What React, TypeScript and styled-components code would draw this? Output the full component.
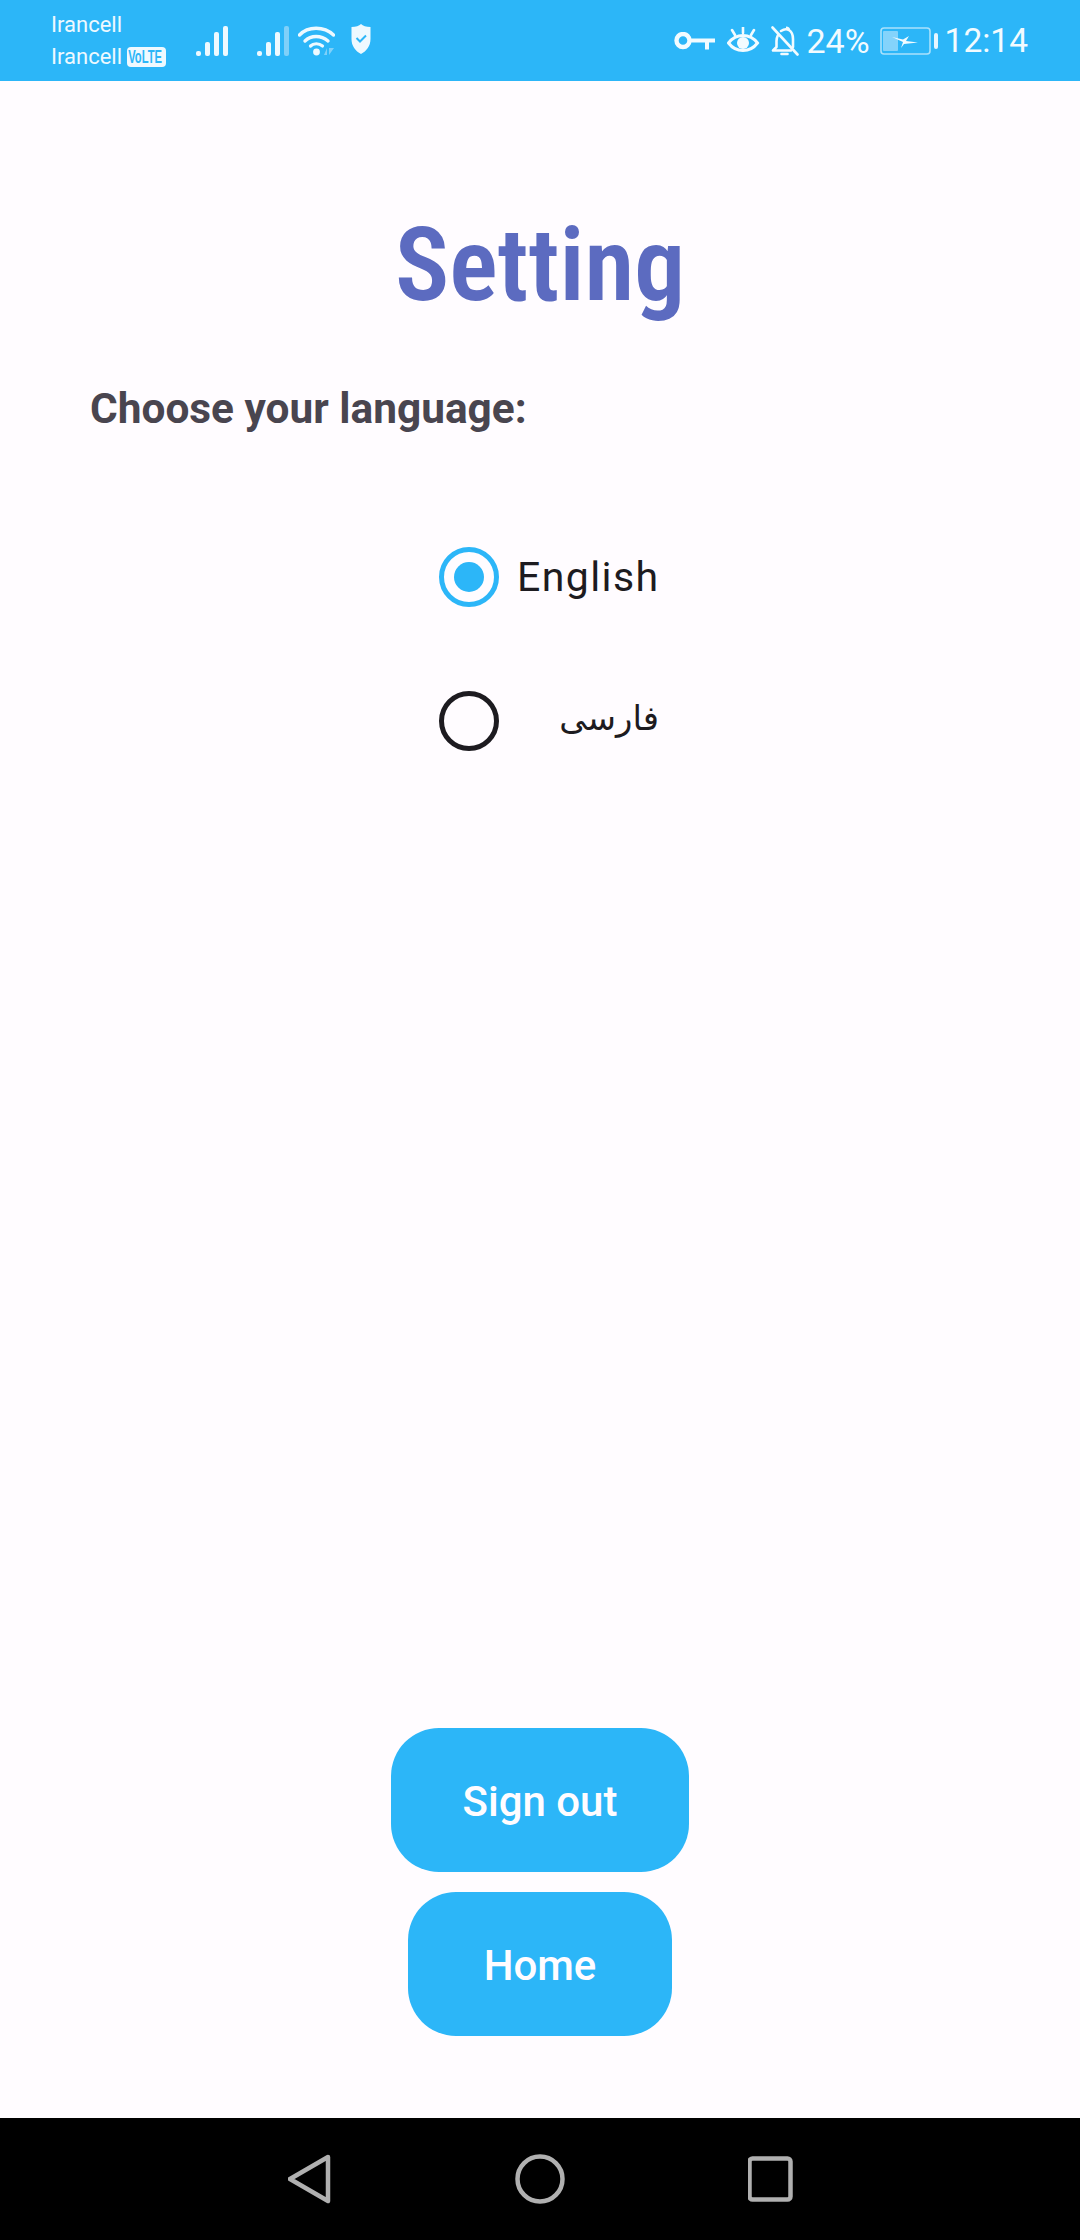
import styled, { createGlobalStyle } from 'styled-components';

const GlobalStyle = createGlobalStyle`
  html, body {
    margin: 0;
    padding: 0;
    background: #fffcff;
  }
  * {
    box-sizing: border-box;
  }
`;

const Wifi = () => (
  <svg width="37" height="31" viewBox="0 0 37 31" fill="none">
    <path d="M1.500 10C10 1 26 1 35.500 10" stroke="#eef9ff" strokeWidth="3.400" strokeLinecap="round" />
    <path d="M7 16C13 10 23 10 30 16" stroke="#eef9ff" strokeWidth="3.400" strokeLinecap="round" />
    <path d="M12.500 21C15.500 18 21 18 24.500 21" stroke="#eef9ff" strokeWidth="3.200" strokeLinecap="round" />
    <circle cx="18.500" cy="27" r="3.400" fill="#eef9ff" />
    <path d="M26 30h3v-7zM31 23h5l-5 7z" fill="#7fd0f9" />
  </svg>
);

const Shield = () => (
  <svg width="20" height="32" viewBox="0 0 20 32">
    <path d="M10 1c2 2 5 3 9.500 3v12c0 7-4 12-9.500 15C4.500 28 .5 23 .5 16V4C5 4 8 3 10 1z" fill="#eef9ff" />
    <path d="M5.500 15l3.500 3.500 6-6" stroke="#2cb6f8" strokeWidth="2" fill="none" />
  </svg>
);

const Key = () => (
  <svg width="43" height="18" viewBox="0 0 43 18" fill="none">
    <circle cx="9" cy="8.500" r="6.500" stroke="#f2fbff" strokeWidth="4.400" />
    <path d="M15 8.500h26M33 8.500v9" stroke="#f2fbff" strokeWidth="4" />
  </svg>
);

const Eye = () => (
  <svg width="34" height="28" viewBox="0 0 34 28" fill="none">
    <path d="M1.500 16C9 6 23 6 30.500 16 23 26 9 26 1.500 16z" stroke="#f2fbff" strokeWidth="3" />
    <circle cx="16" cy="16" r="6" fill="#f2fbff" />
    <path d="M16 0v6M5 3l3 5M27 3l-3 5" stroke="#f2fbff" strokeWidth="2.600" strokeLinecap="round" />
  </svg>
);

const BellOff = () => (
  <svg width="28" height="30" viewBox="0 0 28 30" fill="none">
    <path d="M7 9c-1 2-1.500 4-1.500 6v6L2 24.500h18M10 5c3-2 6-2 8-1 3 2 4 5 4 9v8" stroke="#f2fbff" strokeWidth="2.600" strokeLinecap="round" strokeLinejoin="round" />
    <path d="M1.500 1.500l25 27" stroke="#f2fbff" strokeWidth="2.600" strokeLinecap="round" />
    <path d="M10.500 28h6" stroke="#f2fbff" strokeWidth="2.600" strokeLinecap="round" />
    <path d="M15 1.500c2 0 3 1 3 2.500" stroke="#f2fbff" strokeWidth="2.200" />
  </svg>
);

const Battery = () => (
  <svg width="58" height="28" viewBox="0 0 58 28" fill="none">
    <rect x="1" y="1" width="49" height="26" rx="3" stroke="#a9e1fc" strokeWidth="1.600" />
    <rect x="3" y="4" width="15" height="20" rx="1" fill="#84d3fb" />
    <path d="M12 10l11 2.500 6-3.500-3 5 12 1.500-14 1.500-3 4 2-6z" fill="#f2fbff" />
    <rect x="54" y="6" width="4" height="16" rx="2" fill="#e6f6ff" />
  </svg>
);

const NavBack = () => (
  <svg width="44" height="50" viewBox="0 0 44 50" fill="none">
    <path d="M40 3L2 25l38 22z" stroke="#b0b0b0" strokeWidth="4.500" strokeLinejoin="round" />
  </svg>
);

const NavHome = () => (
  <svg width="50" height="50" viewBox="0 0 50 50" fill="none">
    <circle cx="25" cy="25" r="22.500" stroke="#b0b0b0" strokeWidth="4.500" />
  </svg>
);

const NavRecent = () => (
  <svg width="46" height="46" viewBox="0 0 46 46" fill="none">
    <rect x="1.500" y="2.500" width="41" height="41" rx="3" stroke="#b0b0b0" strokeWidth="4.500" />
  </svg>
);

const Bars = ({ dim }: { dim?: boolean }) => (
  <BarsRow>
    <Bar $h={5} />
    <Bar $h={14} />
    <Bar $h={24} />
    <Bar $h={30} $dim={dim} />
  </BarsRow>
);

const App = (): JSX.Element => {
  return (
    <Page>
      <GlobalStyle />
      <StatusBar>
        <Carrier>
          <span>Irancell</span>
          <CarrierLine>
            Irancell
            <VolteBadge>
              <VolteText>VoLTE</VolteText>
            </VolteBadge>
          </CarrierLine>
        </Carrier>
        <LeftIcons>
          <Bars />
          <SecondBars>
            <Bars dim />
          </SecondBars>
          <Wifi />
          <ShieldSlot>
            <Shield />
          </ShieldSlot>
        </LeftIcons>
        <RightIcons>
          <Key />
          <Eye />
          <BellOff />
          <Percent>24%</Percent>
          <Battery />
          <Clock>12:14</Clock>
        </RightIcons>
      </StatusBar>

      <Content>
        <Title>Setting</Title>
        <Subtitle>Choose your language:</Subtitle>
        <RadioGroup>
          <RadioRow>
            <RadioCircle $checked />
            <RadioLabel>English</RadioLabel>
          </RadioRow>
          <RadioRow>
            <RadioCircle />
            <RadioLabel dir="rtl">فارسی</RadioLabel>
          </RadioRow>
        </RadioGroup>
        <Actions>
          <ActionButton $width={298}>Sign out</ActionButton>
          <ActionButton $width={264}>Home</ActionButton>
        </Actions>
      </Content>

      <NavBar>
        <NavBack />
        <NavHome />
        <NavRecent />
      </NavBar>
    </Page>
  );
};

export default App;

const Page = styled.div`
  display: flex;
  flex-direction: column;
  width: 1080px;
  height: 2240px;
  background: #fffcff;
  font-family: Roboto, 'Noto Sans', sans-serif;
  overflow: hidden;
`;
const StatusBar = styled.div`
  display: flex;
  align-items: center;
  flex-shrink: 0;
  height: 81px;
  padding: 0 52px 0 51px;
  background: #2cb6f8;
  color: #eef9ff;
`;
const Carrier = styled.div`
  display: flex;
  flex-direction: column;
  width: 145px;
  font-size: 22px;
  line-height: 32px;
`;
const CarrierLine = styled.div`
  display: flex;
  align-items: center;
  gap: 5px;
  white-space: nowrap;
`;
const VolteBadge = styled.span`
  display: inline-block;
  width: 39px;
  height: 20px;
  border-radius: 4px;
  background: #eef9ff;
  color: #2cb6f8;
`;
const VolteText = styled.span`
  display: block;
  padding-left: 2px;
  font-family: 'Liberation Sans', sans-serif;
  font-size: 18px;
  font-weight: 700;
  line-height: 20px;
  transform: scaleX(0.62);
  transform-origin: left center;
`;
const LeftIcons = styled.div`
  display: flex;
  align-items: center;
`;
const BarsRow = styled.div`
  display: flex;
  align-items: flex-end;
  gap: 4px;
  height: 30px;
`;
const Bar = styled.div<{ $h: number; $dim?: boolean }>`
  width: 5px;
  height: ${(p) => p.$h}px;
  border-radius: 2px;
  background: ${(p) => (p.$dim ? '#7fd0f9' : '#eef9ff')};
`;
const SecondBars = styled.div`
  margin: 0 9px 0 29px;
`;
const ShieldSlot = styled.div`
  margin-left: 16px;
`;
const RightIcons = styled.div`
  display: flex;
  align-items: center;
  gap: 10px;
  margin-left: auto;
  color: #f2fbff;
`;
const Percent = styled.span`
  margin-left: -3px;
  font-size: 34px;
  line-height: 40px;
`;
const Clock = styled.span`
  margin-left: -3px;
  font-size: 33.500px;
  line-height: 40px;
`;
const Content = styled.div`
  display: flex;
  flex: 1;
  flex-direction: column;
  min-height: 0;
`;
const Title = styled.h1`
  margin: 129px 0 0;
  color: #5c6bc0;
  font-size: 101.500px;
  font-stretch: condensed;
  font-weight: 600;
  line-height: 112px;
  text-align: center;
`;
const Subtitle = styled.h2`
  margin: 63px 0 0 90px;
  color: #49454f;
  font-size: 42.400px;
  font-weight: 700;
  line-height: 48px;
`;
const RadioGroup = styled.div`
  display: flex;
  flex-direction: column;
  gap: 84px;
  width: 220px;
  margin: 114px 0 0 439px;
`;
const RadioRow = styled.div`
  display: flex;
  align-items: center;
  gap: 18px;
  height: 60px;
`;
const RadioCircle = styled.div<{ $checked?: boolean }>`
  display: flex;
  align-items: center;
  justify-content: center;
  flex-shrink: 0;
  width: 60px;
  height: 60px;
  border: 5.500px solid ${(p) => (p.$checked ? '#2cb6f8' : '#1d1b20')};
  border-radius: 50%;

  &::after {
    content: '';
    display: ${(p) => (p.$checked ? 'block' : 'none')};
    width: 30px;
    height: 30px;
    border-radius: 50%;
    background: #2cb6f8;
  }
`;
const RadioLabel = styled.span`
  flex: 1;
  color: #1d1b20;
  font-family: Roboto, 'DejaVu Sans', sans-serif;
  font-size: 41px;
  letter-spacing: 1.400px;
  line-height: 48px;
  text-align: left;

  &[dir='rtl'] {
    margin-bottom: 6px;
    font-size: 34px;
    letter-spacing: 0;
    text-align: right;
  }
`;
const Actions = styled.div`
  display: flex;
  flex-direction: column;
  align-items: center;
  gap: 20px;
  margin-top: auto;
  padding-bottom: 82px;
`;
const ActionButton = styled.button<{ $width: number }>`
  width: ${(p) => p.$width}px;
  height: 144px;
  padding: 2px 0 0;
  border: none;
  border-radius: 48px;
  background: #2cb6f8;
  color: #fffcff;
  font-family: Roboto, sans-serif;
  font-size: 42px;
  font-weight: 500;
`;
const NavBar = styled.div`
  display: grid;
  grid-template-columns: 44px 50px 46px;
  column-gap: 183px;
  align-items: center;
  flex-shrink: 0;
  height: 122px;
  padding-left: 288px;
  background: #000;
`;
